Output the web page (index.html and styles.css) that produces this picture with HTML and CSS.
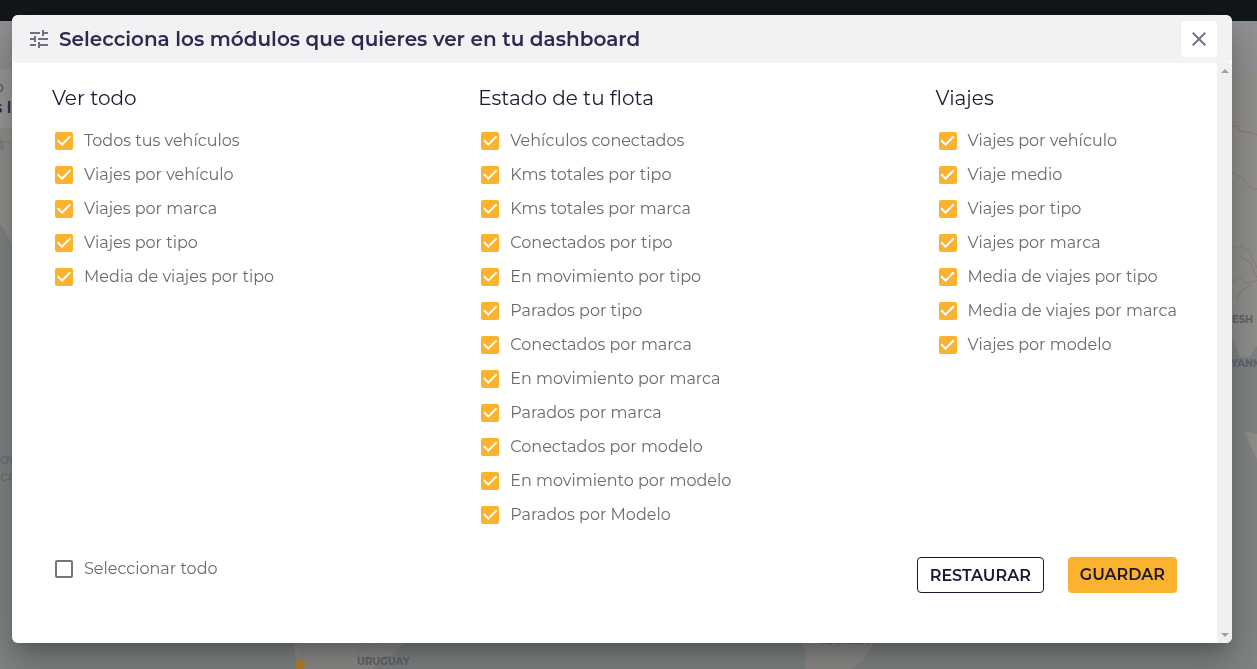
FILE: index.html
```html
<!DOCTYPE html>
<html lang="es">
<head>
<meta charset="utf-8">
<meta name="viewport" content="width=device-width, initial-scale=1">
<title>Dashboard</title>
<link rel="stylesheet" href="styles.css">
</head>
<body>
<svg class="map" viewBox="0 0 1257 669" preserveAspectRatio="xMidYMid slice" aria-hidden="true">
  <rect width="1257" height="669" fill="#808586"/>
  <rect width="1257" height="21" fill="#11161b"/>
  <rect y="21" width="1257" height="48" fill="#929295"/>
  <path fill="#92918e" d="M1200 69h57v277c-4 3-5 10-8 11h-9l-4-12-6-10h-30z"/>
  <path fill="#92918e" d="M1244 431l13 3v25l-5-10z"/>
  <path fill="#92918e" d="M0 69h40v200L12 245 0 224z"/>
  <path fill="#9a9a9b" d="M0 69h40v59H0z"/>
  <path fill="#7f8586" d="M0 137l4 5v8H0zM0 224l5 6 7 15v30H0z"/>
  <g fill="none" stroke="#857b7b">
    <path d="M1230 126h7l3 5 7 1 10 3M0 142h12"/>
    <path stroke="#84807f" d="M1230 171l13 8 6 8 8 2M1230 249l11-3 8 4 8 18M1239 256l12 7 6 15M1230 283l10-6 5 5 5 1 7-3M1236 300l6-10 8-5"/>
  </g>
  <path fill="#8f8e8b" d="M293 635l4 34h77l10-13h8l8-9 16-12z"/>
  <path fill="none" stroke="#838482" d="M304 640l-3 10 3 9M366 640l-8 15 7 6 4 8M380 642l10 10 18-7"/>
  <path fill="#8f8e8b" d="M798 635l8 18-1 16h46l12-9 16-25z"/>
  <circle cx="300" cy="665" r="5" fill="#b98327"/>
  <g class="map-label">
    <text x="357" y="665">URUGUAY</text>
    <text x="822" y="644">NAMIBIA</text>
    <text x="1232" y="323">ESH</text>
    <text x="1231" y="367">YANM</text>
  </g>
  <g class="sea-label">
    <text x="0" y="464">ac</text>
    <text x="0" y="481">co</text>
  </g>
  <text class="card-caption" x="-5" y="92">o</text>
  <text class="card-title" x="-6" y="113">s lo</text>
</svg>

<main class="page">
  <section class="dialog" role="dialog" aria-modal="true" aria-labelledby="dialog-title">
    <header class="dialog-header">
      <svg class="tune" viewBox="0 0 24 24" aria-hidden="true"><path d="M3 17v2h6v-2H3zM3 5v2h10V5H3zm10 16v-2h8v-2h-8v-2h-2v6h2zM7 9v2H3v2h4v2h2V9H7zm14 4v-2H11v2h10zm-6-4h2V7h4V5h-4V3h-2v6z"/></svg>
      <h1 class="title" id="dialog-title">Selecciona los módulos que quieres ver en tu dashboard</h1>
      <button class="close" type="button" aria-label="Cerrar"><svg viewBox="0 0 24 24" aria-hidden="true"><path d="M19 6.41L17.59 5 12 10.59 6.41 5 5 6.41 10.59 12 5 17.59 6.41 19 12 13.41 17.59 19 19 17.59 13.41 12z"/></svg></button>
    </header>
    <div class="dialog-body">
      <form class="content">
        <div class="columns">
          <fieldset class="group">
            <legend class="group-title">Ver todo</legend>
            <label class="option"><input class="check" type="checkbox" checked>Todos tus vehículos</label>
            <label class="option"><input class="check" type="checkbox" checked>Viajes por vehículo</label>
            <label class="option"><input class="check" type="checkbox" checked>Viajes por marca</label>
            <label class="option"><input class="check" type="checkbox" checked>Viajes por tipo</label>
            <label class="option"><input class="check" type="checkbox" checked>Media de viajes por tipo</label>
          </fieldset>
          <fieldset class="group">
            <legend class="group-title">Estado de tu flota</legend>
            <label class="option"><input class="check" type="checkbox" checked>Vehículos conectados</label>
            <label class="option"><input class="check" type="checkbox" checked>Kms totales por tipo</label>
            <label class="option"><input class="check" type="checkbox" checked>Kms totales por marca</label>
            <label class="option"><input class="check" type="checkbox" checked>Conectados por tipo</label>
            <label class="option"><input class="check" type="checkbox" checked>En movimiento por tipo</label>
            <label class="option"><input class="check" type="checkbox" checked>Parados por tipo</label>
            <label class="option"><input class="check" type="checkbox" checked>Conectados por marca</label>
            <label class="option"><input class="check" type="checkbox" checked>En movimiento por marca</label>
            <label class="option"><input class="check" type="checkbox" checked>Parados por marca</label>
            <label class="option"><input class="check" type="checkbox" checked>Conectados por modelo</label>
            <label class="option"><input class="check" type="checkbox" checked>En movimiento por modelo</label>
            <label class="option"><input class="check" type="checkbox" checked>Parados por Modelo</label>
          </fieldset>
          <fieldset class="group">
            <legend class="group-title">Viajes</legend>
            <label class="option"><input class="check" type="checkbox" checked>Viajes por vehículo</label>
            <label class="option"><input class="check" type="checkbox" checked>Viaje medio</label>
            <label class="option"><input class="check" type="checkbox" checked>Viajes por tipo</label>
            <label class="option"><input class="check" type="checkbox" checked>Viajes por marca</label>
            <label class="option"><input class="check" type="checkbox" checked>Media de viajes por tipo</label>
            <label class="option"><input class="check" type="checkbox" checked>Media de viajes por marca</label>
            <label class="option"><input class="check" type="checkbox" checked>Viajes por modelo</label>
          </fieldset>
        </div>
        <div class="footer">
          <label class="option"><input class="check" type="checkbox">Seleccionar todo</label>
          <div class="actions">
            <button class="btn btn-outline" type="reset">RESTAURAR</button>
            <button class="btn btn-primary" type="submit">GUARDAR</button>
          </div>
        </div>
      </form>
      <div class="scrollbar" aria-hidden="true">
        <span class="arrow arrow-up"></span>
        <span class="arrow arrow-down"></span>
      </div>
    </div>
  </section>
</main>
</body>
</html>
```
FILE: styles.css
```css
* {
  box-sizing: border-box;
}

body {
  margin: 0;
  background: #808586;
  font-family: Montserrat, Inter, sans-serif;
  font-size: 16px;
}

.map {
  position: fixed;
  inset: 0;
  width: 100%;
  height: 100%;
}

.map-label {
  fill: #5f676d;
  font-size: 10px;
  font-weight: 700;
}

.sea-label {
  fill: #687277;
  font-size: 14px;
  font-style: italic;
  font-weight: 500;
}

.card-caption {
  fill: #4c4c4f;
  font-size: 14px;
}

.card-title {
  fill: #29243f;
  font-size: 16px;
  font-weight: 600;
}

.page {
  position: relative;
  padding: 15px 25px 26px 12px;
}

.dialog {
  overflow: hidden;
  border-radius: 6px;
  background: #fff;
  box-shadow: 0 11px 15px -7px rgba(0, 0, 0, 0.2),
    0 24px 38px 3px rgba(0, 0, 0, 0.14),
    0 9px 46px 8px rgba(0, 0, 0, 0.12);
}

.dialog-header {
  display: flex;
  align-items: center;
  gap: 8px;
  height: 48px;
  padding: 0 15px;
  border-radius: 6px;
  background: #f2f2f4;
}

.tune {
  width: 24px;
  height: 24px;
  fill: #6f6f7e;
}

.title {
  flex: 1;
  margin: 0;
  color: #2f2850;
  font-size: 20px;
  font-weight: 600;
  line-height: 24px;
}

.close {
  display: flex;
  align-items: center;
  justify-content: center;
  width: 36px;
  height: 36px;
  padding: 0;
  border: 0;
  border-radius: 4px;
  background: #fff;
}

.close svg {
  width: 24px;
  height: 24px;
  fill: #73748a;
}

.dialog-body {
  display: flex;
}

.content {
  flex: 1;
  padding: 20px 40px 50px;
}

.columns {
  display: flex;
  justify-content: space-between;
}

.group {
  min-width: 0;
  margin: 0;
  padding: 0;
  border: 0;
}

.group-title {
  padding: 0 0 10px;
  color: #1c1733;
  font-size: 20px;
  font-weight: 400;
  line-height: 30px;
}

.option {
  display: flex;
  align-items: center;
  gap: 11px;
  height: 34px;
  padding-left: 3px;
  color: #6b6b6b;
  font-weight: 400;
  white-space: nowrap;
}

.check {
  appearance: none;
  display: block;
  flex: none;
  width: 18px;
  height: 18px;
  margin: 2px 0 0;
  border: 2px solid #757575;
  border-radius: 2px;
}

.check:checked {
  border: 0;
  background: #fbb32f;
}

.check:checked::before {
  content: "";
  display: block;
  height: 18px;
  background: #fff;
  clip-path: polygon(38.9% 77.8%, 11.1% 50%, 18.9% 42.2%, 38.9% 62.1%, 81.1% 19.9%, 88.9% 27.8%);
}

.footer {
  display: flex;
  justify-content: space-between;
  margin-top: 20px;
}

.actions {
  display: flex;
  gap: 24px;
  margin-top: 6px;
}

.btn {
  height: 36px;
  padding: 0 12px;
  border: 0;
  border-radius: 4px;
  color: #1c1733;
  font-family: inherit;
  font-size: 16px;
  font-weight: 600;
}

.btn-outline {
  border: 1px solid #1c1733;
  background: #fff;
}

.btn-primary {
  padding-bottom: 2px;
  background: #fbb32f;
}

.scrollbar {
  display: flex;
  flex-direction: column;
  align-items: center;
  justify-content: space-between;
  width: 15px;
  padding: 6px 0;
  background: #f0f0f0;
}

.arrow {
  border: 4px solid transparent;
}

.arrow-up {
  border-top: 0;
  border-bottom-color: #9f9f9f;
}

.arrow-down {
  border-bottom: 0;
  border-top-color: #9f9f9f;
}
```
